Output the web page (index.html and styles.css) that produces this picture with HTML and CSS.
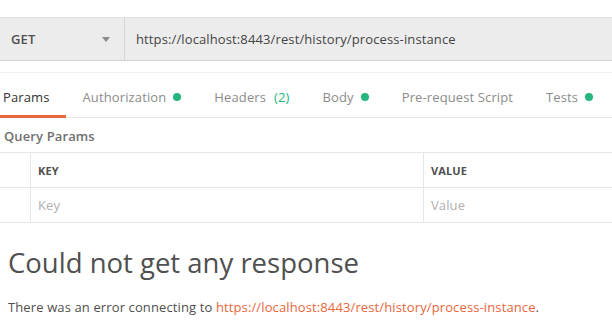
FILE: index.html
```html
<!DOCTYPE html>
<html lang="en">
<head>
    <meta charset="UTF-8">
    <title>Request</title>
    <link rel="stylesheet" href="styles.css">
</head>
<body>

<div class="request-bar">
    <div class="method">
        <span>GET</span>
        <span class="caret"></span>
    </div>
    <div class="url">https://localhost:8443/rest/history/process-instance</div>
</div>

<div class="tabs">
    <div class="tab active">Params</div>
    <div class="tab">Authorization <span class="dot"></span></div>
    <div class="tab">Headers <span class="count">(2)</span></div>
    <div class="tab">Body <span class="dot"></span></div>
    <div class="tab">Pre-request Script</div>
    <div class="tab">Tests <span class="dot"></span></div>
</div>

<div class="section-title">Query Params</div>
<div class="params">
    <div class="row head">
        <div class="cell check"></div>
        <div class="cell key">KEY</div>
        <div class="cell value">VALUE</div>
    </div>
    <div class="row">
        <div class="cell check"></div>
        <div class="cell key placeholder">Key</div>
        <div class="cell value placeholder">Value</div>
    </div>
</div>

<div class="response">
    <h1>Could not get any response</h1>
    <p>There was an error connecting to <a href="#">https://localhost:8443/rest/history/process-instance</a>.</p>
</div>

</body>
</html>
```

FILE: styles.css
```css
body {
    margin: 0;
    padding-top: 17px;
    font-family: "Open Sans", "Liberation Sans", sans-serif;
    font-size: 13px;
    letter-spacing: 0.12px;
    color: #505050;
    background: #fff;
}

.request-bar {
    display: flex;
    height: 42px;
    background: #ececec;
    border-top: 1px solid #e0e0e0;
    border-bottom: 1px solid #d2d2d2;
}

.method {
    width: 125px;
    box-sizing: border-box;
    padding: 0 14px 0 11px;
    display: flex;
    align-items: center;
    justify-content: space-between;
    border-right: 1px solid #d6d6d6;
    font-weight: 600;
    color: #505050;
}

.caret {
    width: 0;
    height: 0;
    border-left: 4px solid transparent;
    border-right: 4px solid transparent;
    border-top: 5px solid #8a8a8a;
}

.url {
    display: flex;
    align-items: center;
    padding-left: 11px;
    color: #454545;
}

.tabs {
    display: flex;
    gap: 1px;
    margin-top: 11px;
    border-top: 1px solid #f0f0f0;
    border-bottom: 1px solid #e6e6e6;
    height: 44px;
}

.tab {
    display: flex;
    align-items: center;
    gap: 7px;
    padding: 5px 16px 0;
    color: #8c8c8c;
    border-bottom: 3px solid transparent;
    margin-bottom: -1px;
}

.tab.active {
    color: #333;
    border-bottom-color: #e8673c;
    padding-left: 3px;
}

.dot {
    width: 8px;
    height: 8px;
    border-radius: 50%;
    background: #26b47f;
}

.count {
    color: #26b47f;
    margin-left: 1px;
}

.section-title {
    font-weight: 600;
    color: #707070;
    padding: 9px 4px 0;
    height: 25px;
}

.params {
    border-top: 1px solid #e6e6e6;
}

.row {
    display: flex;
    height: 34px;
    border-bottom: 1px solid #e6e6e6;
}

.cell {
    display: flex;
    align-items: center;
    padding-left: 7px;
}

.check {
    width: 30px;
    padding: 0;
    border-right: 1px solid #e6e6e6;
}

.key {
    width: 385px;
    border-right: 1px solid #e6e6e6;
}

.head .cell {
    font-size: 11px;
    font-weight: 700;
    color: #505050;
}

.placeholder {
    color: #b0b0b0;
}

.response {
    padding: 0 8px;
}

h1 {
    font-weight: 400;
    font-size: 27.5px;
    letter-spacing: 0;
    color: #505050;
    margin: 21px 0 17px;
}

p {
    margin: 0;
    font-size: 13px;
}

a {
    color: #e8673c;
    text-decoration: none;
}
```
